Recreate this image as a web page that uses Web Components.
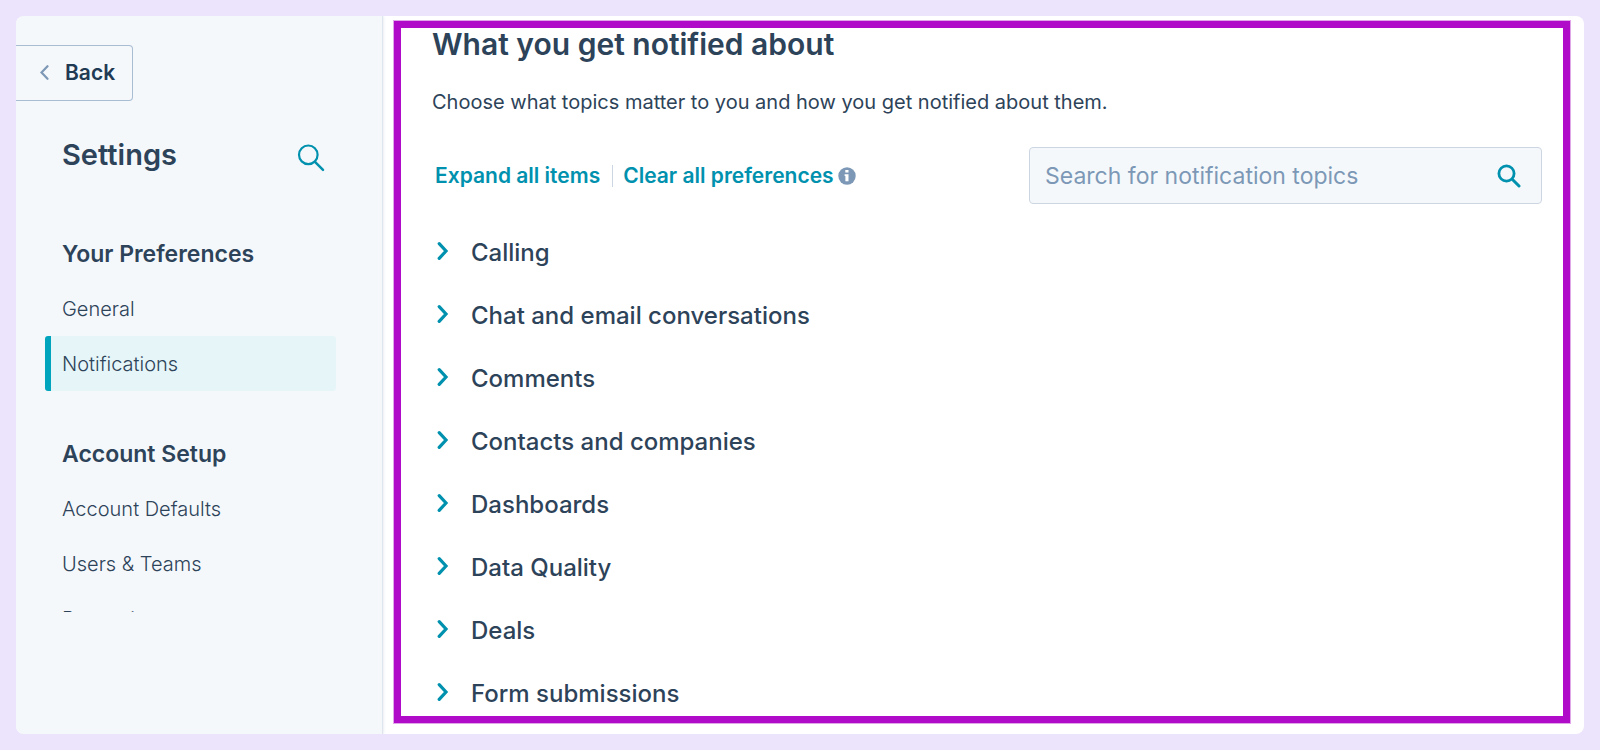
<!DOCTYPE html>
<html lang="en">
<head>
<meta charset="utf-8">
<title>Settings – Notifications</title>
<style>
  html {
    --ink: #2d4359;
    --teal: #0091ae;
    --slate: #7c98b6;
    --line: #cbd6e2;
    --panel: #f5f8fb;
    --page: #ece4fc;
  }
  body {
    margin: 0;
    background: var(--page);
    color: var(--ink);
    font-family: Inter, "Open Sans", sans-serif;
    font-size: 20px;
    font-weight: 350;
  }
</style>
</head>
<body>
<settings-app>
  <settings-sidebar slot="sidebar">
    <nav-group heading="Your Preferences">
      <nav-item href="#general">General</nav-item>
      <nav-item href="#notifications" active>Notifications</nav-item>
    </nav-group>
    <nav-group heading="Account Setup">
      <nav-item href="#defaults">Account Defaults</nav-item>
      <nav-item href="#users">Users &amp; Teams</nav-item>
      <nav-item href="#properties">Properties</nav-item>
    </nav-group>
  </settings-sidebar>
  <notification-panel>
    <topic-row>Calling</topic-row>
    <topic-row>Chat and email conversations</topic-row>
    <topic-row>Comments</topic-row>
    <topic-row>Contacts and companies</topic-row>
    <topic-row>Dashboards</topic-row>
    <topic-row>Data Quality</topic-row>
    <topic-row>Deals</topic-row>
    <topic-row>Form submissions</topic-row>
  </notification-panel>
</settings-app>

<script>
  const define = (name, html, setup) => {
    const template = document.createElement('template');
    template.innerHTML = html;
    customElements.define(name, class extends HTMLElement {
      constructor() {
        super();
        this.attachShadow({ mode: 'open' }).append(template.content.cloneNode(true));
      }
      connectedCallback() {
        if (setup) setup(this, this.shadowRoot);
      }
    });
  };

  define('settings-app', `
    <style>
      :host {
        display: flex;
        box-sizing: border-box;
        height: 100vh;
        padding: 16px;
      }
      .card {
        display: flex;
        flex: 1;
        min-width: 0;
        border-radius: 8px;
        background: #fff;
        overflow: hidden;
      }
      main {
        display: flex;
        flex: 1;
        min-width: 0;
        padding: 5px 14px 11px 12px;
      }
    </style>
    <div class="card">
      <slot name="sidebar"></slot>
      <main><slot></slot></main>
    </div>
  `);

  define('settings-sidebar', `
    <style>
      :host {
        display: flex;
        flex-direction: column;
        flex: 0 0 366px;
        box-sizing: border-box;
        padding: 29px 0 122px;
        background: var(--panel);
        box-shadow: 1px 0 1px #dfe5ec, 2px 0 3px #eef1f5;
      }
      .back {
        display: flex;
        align-items: center;
        align-self: flex-start;
        gap: 16px;
        flex: none;
        box-sizing: border-box;
        height: 56px;
        padding: 0 17px 2px 24px;
        border: 1px solid #a9bdd2;
        border-left: 0;
        border-radius: 0 4px 4px 0;
        background: none;
        color: #213a54;
        font: inherit;
        font-size: 21px;
        font-weight: 600;
      }
      header {
        display: flex;
        justify-content: space-between;
        align-items: flex-end;
        flex: none;
        margin-top: 36px;
        padding: 0 57px 0 46px;
      }
      h1 {
        margin: 0;
        font-size: 29px;
        line-height: 36px;
        font-weight: 600;
      }
      .find {
        display: block;
        padding: 0;
        border: 0;
        background: none;
      }
      svg { display: block; }
      nav {
        display: flex;
        flex-direction: column;
        gap: 48px;
        flex: 1;
        min-height: 0;
        margin-top: 66px;
        padding: 0 46px 0 29px;
        overflow: hidden;
      }
    </style>
    <button class="back" type="button">
      <svg width="9" height="15" viewBox="0 0 9 15" fill="none" stroke="#7c98b6" stroke-width="2.2" stroke-linecap="round" aria-hidden="true"><path d="M7.500 1.200 1.500 7.500l6 6.300"/></svg>
      Back
    </button>
    <header>
      <h1>Settings</h1>
      <button class="find" type="button" aria-label="Search settings">
        <svg width="28" height="29" viewBox="0 0 28 29" fill="none" stroke="#0091ae" stroke-width="2.2" stroke-linecap="round" aria-hidden="true"><circle cx="11.300" cy="10.800" r="9.300"/><path stroke-width="2.5" d="m18 17.800 8 8"/></svg>
      </button>
    </header>
    <nav aria-label="Settings"><slot></slot></nav>
  `);

  define('nav-group', `
    <style>
      :host { display: block; }
      h2 {
        margin: 0 0 12px;
        padding-left: 17px;
        font-size: 23px;
        line-height: 30px;
        font-weight: 600;
      }
    </style>
    <h2></h2>
    <slot></slot>
  `, (host, root) => {
    root.querySelector('h2').textContent = host.getAttribute('heading');
  });

  define('nav-item', `
    <style>
      :host { display: block; }
      a {
        display: block;
        border-radius: 3px;
        padding: 2px 0 0 17px;
        line-height: 53px;
        color: inherit;
        text-decoration: none;
      }
      :host([active]) a {
        background: linear-gradient(to right, #00a4bd 6px, #e5f5f8 6px);
      }
    </style>
    <a><slot></slot></a>
  `, (host, root) => {
    const a = root.querySelector('a');
    a.href = host.getAttribute('href');
    if (host.hasAttribute('active')) a.setAttribute('aria-current', 'page');
  });

  define('notification-panel', `
    <style>
      :host {
        display: block;
        flex: 1;
        min-width: 0;
        box-sizing: border-box;
        padding: 1px 21px 0 31px;
        border: 7px solid #b00bc8;
        box-shadow: 0 0 0 1px #dfa6e8;
        overflow: hidden;
      }
      h2 {
        margin: 0;
        font-size: 30px;
        line-height: 30px;
        font-weight: 600;
      }
      p {
        margin: 28px 0 30px;
        line-height: 30px;
        font-weight: 400;
      }
      .bar {
        display: flex;
        justify-content: space-between;
        align-items: center;
        margin-bottom: 17px;
      }
      .actions {
        display: flex;
        align-items: center;
        padding-left: 3px;
      }
      .actions button {
        padding: 0;
        border: 0;
        background: none;
        color: var(--teal);
        font: inherit;
        font-size: 21px;
        line-height: 22px;
        font-weight: 600;
      }
      .actions button + button {
        margin-left: 12px;
        padding-left: 10px;
        border-left: 1px solid var(--line);
      }
      .info { margin-left: 4px; }
      svg { display: block; flex: none; }
    </style>
    <h2>What you get notified about</h2>
    <p>Choose what topics matter to you and how you get notified about them.</p>
    <div class="bar">
      <div class="actions">
        <button type="button" class="expand">Expand all items</button>
        <button type="button">Clear all preferences</button>
        <svg class="info" width="18" height="18" viewBox="0 0 18 18" role="img" aria-label="Information"><circle cx="9" cy="9" r="8.700" fill="#7c98b6"/><path fill="#fff" d="M7.300 3h3.200v2.600H7.300zM6.600 7.200h3.900v7H7.400V9.100h-.8z"/></svg>
      </div>
      <topic-search></topic-search>
    </div>
    <slot></slot>
  `, (host, root) => {
    root.querySelector('.expand').onclick = () =>
      host.querySelectorAll('topic-row').forEach(row => row.toggleAttribute('open', true));
  });

  define('topic-search', `
    <style>
      :host { display: block; flex: 0 1 513px; min-width: 0; }
      label {
        display: flex;
        align-items: center;
        gap: 12px;
        box-sizing: border-box;
        height: 57px;
        padding: 0 20px 0 15px;
        border: 1px solid var(--line);
        border-radius: 4px;
        background: var(--panel);
      }
      input {
        flex: 1;
        min-width: 0;
        padding: 0;
        border: 0;
        outline: 0;
        background: none;
        color: var(--ink);
        font: inherit;
        font-size: 23px;
        font-weight: 400;
      }
      input::placeholder { color: var(--slate); opacity: 1; }
      svg { display: block; flex: none; }
    </style>
    <label>
      <input type="text" placeholder="Search for notification topics" aria-label="Search for notification topics">
      <svg width="24" height="24" viewBox="0 0 24 24" fill="none" stroke="#0091ae" stroke-linecap="round" aria-hidden="true"><circle cx="9.500" cy="9.500" r="7.600" stroke-width="2.800"/><path stroke-width="3" d="m15.500 15.500 6.500 6.500"/></svg>
    </label>
  `);

  define('topic-row', `
    <style>
      :host { display: block; }
      button {
        display: flex;
        align-items: center;
        gap: 22px;
        width: 100%;
        height: 63px;
        padding: 0 0 0 5px;
        border: 0;
        background: none;
        color: inherit;
        font: inherit;
        font-size: 24px;
        font-weight: 500;
        text-align: left;
      }
      svg { display: block; flex: none; padding-bottom: 4px; }
      :host([open]) svg { transform: rotate(90deg); }
    </style>
    <button type="button" aria-expanded="false">
      <svg width="12" height="20" viewBox="0 0 12 20" fill="none" stroke="#0091ae" stroke-width="3.200" stroke-linecap="round" aria-hidden="true"><path d="m2.200 2.600 6.800 7.400-6.800 7.400"/></svg>
      <span><slot></slot></span>
    </button>
  `, (host, root) => {
    const button = root.querySelector('button');
    button.onclick = () => {
      host.toggleAttribute('open');
      button.setAttribute('aria-expanded', host.hasAttribute('open'));
    };
  });
</script>
</body>
</html>
